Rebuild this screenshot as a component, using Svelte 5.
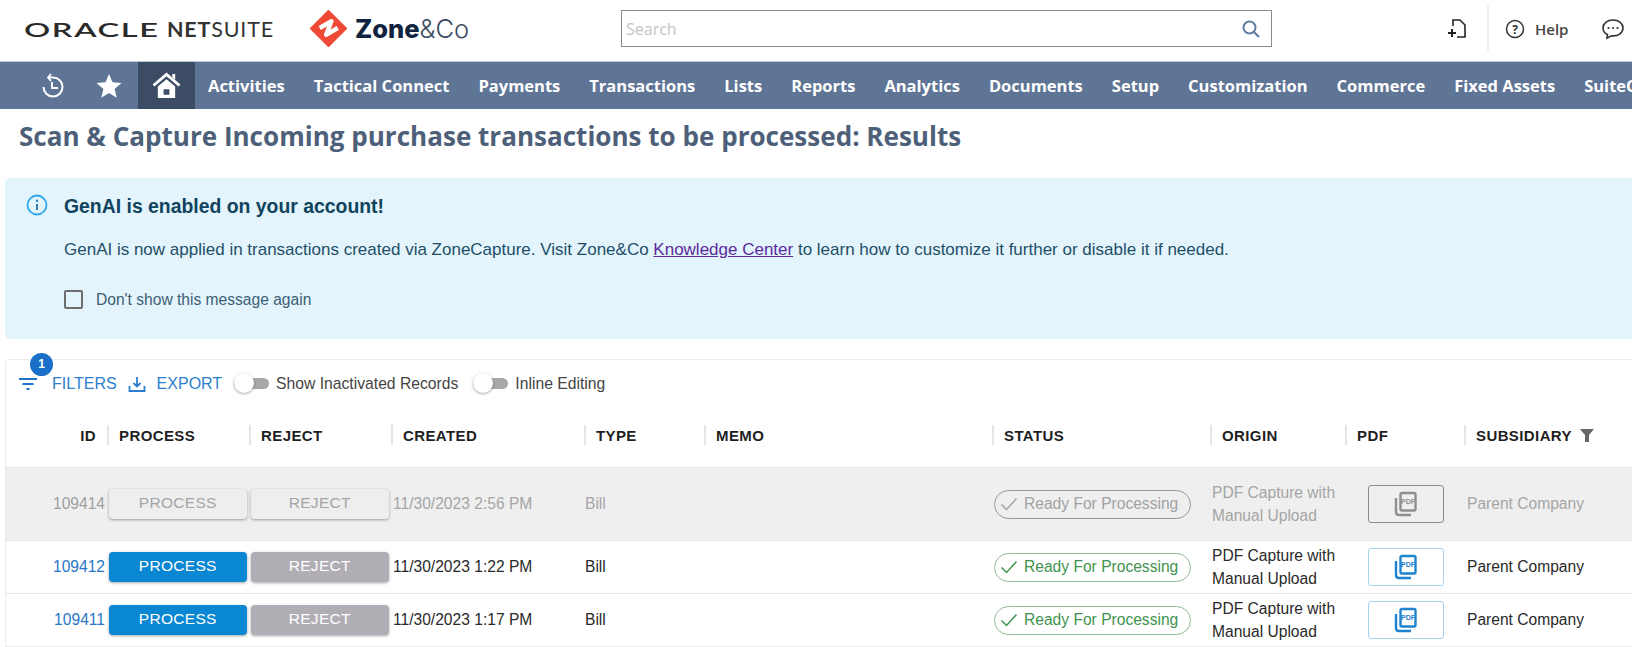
<script>
const navItems = ['Activities', 'Tactical Connect', 'Payments', 'Transactions', 'Lists', 'Reports', 'Analytics', 'Documents', 'Setup', 'Customization', 'Commerce', 'Fixed Assets', 'SuiteCloud'];

const columns = ['ID', 'PROCESS', 'REJECT', 'CREATED', 'TYPE', 'MEMO', 'STATUS', 'ORIGIN', 'PDF', 'SUBSIDIARY'];

const rows = [
    { id: 109414, created: '11/30/2023 2:56 PM', inactive: true },
    { id: 109412, created: '11/30/2023 1:22 PM', inactive: false },
    { id: 109411, created: '11/30/2023 1:17 PM', inactive: false }
];
</script>

<div class="page">
    <header class="topbar">
        <div class="oracle"><span>ORACLE</span></div>
        <div class="netsuite"><b>NET</b>SUITE</div>
        <svg class="zone-mark" viewBox="0 0 38 38" width="37" height="37">
            <path d="M19 1 L37 19 L19 37 L1 19 Z" fill="#ee4a36" stroke="#ee4a36" stroke-width="2" stroke-linejoin="round" />
            <path d="M10 18.500 L22 11.500 L16.500 25.500 L28.500 18.500" fill="none" stroke="#fff" stroke-width="4.500" stroke-linejoin="round" />
        </svg>
        <div class="zone-text"><b>Zone</b>&amp;Co</div>
        <div class="search">
            <span>Search</span>
            <svg viewBox="0 0 20 20" width="20" height="20">
                <circle cx="8.5" cy="8.5" r="6" fill="none" stroke="#5f7ea3" stroke-width="2" />
                <path d="M13 13 L18 18" stroke="#5f7ea3" stroke-width="2.2" />
            </svg>
        </div>
        <svg class="add-page" viewBox="0 0 20 22" width="20" height="22">
            <path d="M6 8 V2 H13 L18 7 V19 H10" fill="none" stroke="#222" stroke-width="1.6" />
            <path d="M5 11 V19 M1 15 H9" stroke="#222" stroke-width="2" />
        </svg>
        <div class="divider"></div>
        <svg class="help-icon" viewBox="0 0 20 20" width="20" height="20">
            <circle cx="10" cy="10" r="8.5" fill="none" stroke="#333" stroke-width="1.5" />
            <text x="10" y="14.5" text-anchor="middle" class="help-q">?</text>
        </svg>
        <span class="help">Help</span>
        <svg class="chat" viewBox="0 0 24 22" width="24" height="22">
            <path d="M12 2 C6 2 2 5.5 2 10 C2 13 4 15.5 6.5 16.5 L6 20 L10.5 17.8 C17 18.500 22 15 22 10 C22 5.500 18 2 12 2 Z" fill="none" stroke="#333" stroke-width="1.6" />
            <circle cx="7.500" cy="10" r="1.100" fill="#333" /><circle cx="12" cy="10" r="1.100" fill="#333" /><circle cx="16.500" cy="10" r="1.100" fill="#333" />
        </svg>
    </header>

    <nav class="nav">
        <div class="nav-icon history">
            <svg viewBox="0 0 26 26" width="26" height="26">
                <path d="M3.500 14 A9.500 9.500 0 1 0 13 4.500 H9" fill="none" stroke="#fff" stroke-width="2" />
                <path d="M11 1 L8 4.500 L11 8" fill="none" stroke="#fff" stroke-width="1.800" />
                <path d="M12 9 V15 H18" fill="none" stroke="#fff" stroke-width="2" />
            </svg>
        </div>
        <div class="nav-icon star">
            <svg viewBox="0 0 26 26" width="26" height="26">
                <path d="M13 1 L16.500 9.300 L25.500 10 L18.600 15.900 L20.800 24.800 L13 20 L5.200 24.800 L7.400 15.900 L0.500 10 L9.500 9.300 Z" fill="#fff" />
            </svg>
        </div>
        <div class="nav-home">
            <svg viewBox="0 0 30 28" width="29" height="27">
                <path d="M1.500 14 L15 2.500 L28.500 14" fill="none" stroke="#fff" stroke-width="3" />
                <path d="M21 2 H24 V8 L21 5.500 Z" fill="#fff" />
                <path d="M6 15 L15 7.500 L24 15 V27 H6 Z M12 18 V23.500 H18 V18 Z" fill="#fff" fill-rule="evenodd" />
            </svg>
        </div>
        <div class="nav-links">
            {#each navItems as item}
                <span>{item}</span>
            {/each}
        </div>
    </nav>

    <h1>Scan &amp; Capture Incoming purchase transactions to be processed: Results</h1>

    <section class="banner">
        <svg class="info" viewBox="0 0 22 22" width="22" height="22">
            <circle cx="11" cy="11" r="9.500" fill="none" stroke="#2fa8ee" stroke-width="1.800" />
            <circle cx="11" cy="6.800" r="1.200" fill="#2f7fae" />
            <path d="M11 10 V16" stroke="#2f7fae" stroke-width="2" />
        </svg>
        <div class="banner-body">
            <div class="banner-title">GenAI is enabled on your account!</div>
            <p>GenAI is now applied in transactions created via ZoneCapture. Visit Zone&amp;Co <span class="kc">Knowledge Center</span> to learn how to customize it further or disable it if needed.</p>
            <label><i class="check"></i>Don't show this message again</label>
        </div>
    </section>

    <section class="card">
        <div class="toolbar">
            <div class="filter-btn">
                <svg viewBox="0 0 20 14" width="20" height="14">
                    <path d="M1 2 H19 M4.500 7 H15.500 M8.500 12 H11.500" stroke="#1f73c9" stroke-width="2" />
                </svg>
                <span class="badge">1</span>
                <span class="tool-link">FILTERS</span>
            </div>
            <div class="export-btn">
                <svg viewBox="0 0 18 18" width="18" height="18">
                    <path d="M9 2 V11 M5.500 8 L9 11.500 L12.500 8" fill="none" stroke="#2c7fd0" stroke-width="1.800" />
                    <path d="M1.500 11 V16 H16.500 V11" fill="none" stroke="#2c7fd0" stroke-width="1.800" />
                </svg>
                <span class="tool-link">EXPORT</span>
            </div>
            <div class="toggle first"><i></i></div>
            <span class="toggle-label">Show Inactivated Records</span>
            <div class="toggle second"><i></i></div>
            <span class="toggle-label">Inline Editing</span>
        </div>

        <div class="row head">
            {#each columns as col, i}
                <div class="th" class:id-col={i === 0}>
                    {col}
                    {#if col === 'SUBSIDIARY'}
                        <svg viewBox="0 0 14 14" width="14" height="14"><path d="M0 1 H14 L9 7 V14 H5 V7 Z" fill="#666" /></svg>
                    {/if}
                </div>
            {/each}
        </div>

        {#each rows as row}
            <div class="row item" class:inactive={row.inactive}>
                <div class="cell id">{row.id}</div>
                <div class="cell btn-cell"><span class="btn process">PROCESS</span></div>
                <div class="cell btn-cell"><span class="btn reject">REJECT</span></div>
                <div class="cell date">{row.created}</div>
                <div class="cell type">Bill</div>
                <div class="cell"></div>
                <div class="cell status-cell">
                    <span class="pill">
                        <svg viewBox="0 0 18 14" width="18" height="14"><path d="M1.500 7.500 L6.500 12.500 L16.500 1.500" fill="none" stroke="currentColor" stroke-width="1.500" /></svg>
                        Ready For Processing
                    </span>
                </div>
                <div class="cell origin">PDF Capture with<br />Manual Upload</div>
                <div class="cell pdf-cell">
                    <span class="pdf-btn">
                        <svg viewBox="0 0 24 26" width="24" height="26">
                            <path d="M2 7 V21 Q2 24 5 24 H17" fill="none" stroke="currentColor" stroke-width="2.400" />
                            <rect x="6.500" y="2" width="15" height="17.500" rx="1.500" fill="none" stroke="currentColor" stroke-width="2.400" />
                            <text x="14" y="13" text-anchor="middle" class="pdf-label" fill="currentColor">PDF</text>
                        </svg>
                    </span>
                </div>
                <div class="cell subsidiary">Parent Company</div>
            </div>
        {/each}
    </section>
</div>

<style>
    :global(body) {
        margin: 0;
        background: #fff;
    }

    .page {
        width: 1632px;
        height: 647px;
        overflow: hidden;
        font-family: "Liberation Sans", Arial, sans-serif;
    }

    .topbar {
        display: flex;
        align-items: center;
        height: 61px;
        box-sizing: border-box;
        padding: 0 0 4px 24px;
    }

    .oracle {
        font-family: Lato, sans-serif;
        font-size: 20px;
        font-weight: 600;
        letter-spacing: 1px;
        color: #2a2a2a;
        width: 143px;
    }

    .oracle span {
        display: inline-block;
        transform: scaleX(1.63);
        transform-origin: left center;
    }

    .netsuite {
        font-family: Lato, sans-serif;
        font-size: 21.500px;
        letter-spacing: 0.8px;
        color: #333;
        width: 143px;
    }

    .netsuite b {
        font-weight: 700;
    }

    .zone-text {
        font-family: Inter, sans-serif;
        font-size: 25.500px;
        font-weight: 300;
        color: #3a4a5e;
        margin-left: 8px;
        width: 266px;
    }

    .zone-text b {
        font-weight: 800;
        color: #0f2340;
    }

    .search {
        display: flex;
        align-items: center;
        justify-content: space-between;
        width: 651px;
        height: 37px;
        box-sizing: border-box;
        border: 1px solid #8a8a8a;
        padding: 0 10px 0 4px;
        font-family: "Open Sans", sans-serif;
        font-size: 16px;
        color: #c4c4c4;
    }

    .add-page {
        margin-left: 175px;
    }

    .divider {
        width: 2px;
        height: 47px;
        background: #f1f1f1;
        margin-left: 20px;
    }

    .help-icon {
        margin-left: 16px;
    }

    .help-q {
        font-family: "Open Sans", sans-serif;
        font-weight: 700;
        font-size: 12px;
        fill: #333;
    }

    .help {
        font-family: "Open Sans", sans-serif;
        font-size: 15px;
        font-weight: 600;
        color: #444;
        margin-left: 10px;
    }

    .chat {
        margin-left: 33px;
        flex: none;
    }

    .nav {
        display: flex;
        align-items: stretch;
        height: 48px;
        background: #5f7596;
        border-top: 1px solid #b9c5d6;
        box-sizing: border-box;
        overflow: hidden;
    }

    .nav-icon {
        display: flex;
        align-items: center;
        justify-content: center;
        flex: none;
    }

    .history {
        margin-left: 26px;
        width: 54px;
    }

    .star {
        width: 58px;
    }

    .nav-home {
        display: flex;
        align-items: center;
        justify-content: center;
        width: 57px;
        background: #3c4c64;
        flex: none;
    }

    .nav-links {
        display: flex;
        align-items: center;
        gap: 29px;
        padding-left: 13px;
        font-family: "Open Sans", sans-serif;
        font-weight: 700;
        font-size: 16.500px;
        color: #fff;
        white-space: nowrap;
    }

    h1 {
        margin: 10px 0 0 19px;
        font-family: "Open Sans", sans-serif;
        font-size: 26.050px;
        line-height: 35px;
        font-weight: 700;
        color: #4d5f79;
        white-space: nowrap;
    }

    .banner {
        display: flex;
        height: 161px;
        margin: 24px 0 0 5px;
        box-sizing: border-box;
        padding: 17px 0 0 21px;
        background: #e3f4fc;
        border-radius: 5px 0 0 5px;
        color: #17465f;
    }

    .info {
        flex: none;
        margin-top: -1px;
    }

    .banner-body {
        margin-left: 16px;
    }

    .banner-title {
        font-size: 19.400px;
        line-height: 22px;
        font-weight: 700;
        color: #0f435e;
    }

    .banner p {
        margin: 23px 0 0;
        font-size: 17px;
        line-height: 20px;
        color: #1f4f68;
        white-space: nowrap;
    }

    .kc {
        color: #5b2a9e;
        text-decoration: underline;
    }

    .banner label {
        display: flex;
        align-items: center;
        margin-top: 30px;
        font-size: 15.600px;
        color: #3c6075;
    }

    .check {
        width: 15px;
        height: 15px;
        border: 2px solid #6e6e6e;
        border-radius: 2px;
        margin: 0 13px 0 0;
    }

    .card {
        margin: 20px 0 0 5px;
        border: 1px solid #ececec;
        border-right: none;
        border-radius: 4px 0 0 0;
    }

    .toolbar {
        display: flex;
        align-items: center;
        height: 47px;
        padding-left: 12px;
        font-size: 16px;
    }

    .filter-btn {
        position: relative;
        display: flex;
        align-items: center;
        gap: 14px;
    }

    .badge {
        position: absolute;
        left: 12px;
        top: -22px;
        width: 23px;
        height: 23px;
        border-radius: 50%;
        background: #1a6fc9;
        color: #fff;
        font-size: 12px;
        font-weight: 700;
        text-align: center;
        line-height: 23px;
    }

    .tool-link {
        color: #2c7fd0;
    }

    .export-btn {
        display: flex;
        align-items: center;
        gap: 11px;
        margin-left: 11px;
    }

    .toggle {
        position: relative;
        width: 35px;
        height: 11px;
        background: #a8a8a8;
        border-radius: 6px;
        flex: none;
    }

    .toggle i {
        position: absolute;
        left: 0;
        top: -5px;
        width: 20px;
        height: 20px;
        border-radius: 50%;
        background: #fff;
        box-shadow: 0 1px 3px rgba(0, 0, 0, 0.35);
    }

    .first {
        margin-left: 12px;
    }

    .second {
        margin-left: 15px;
    }

    .toggle-label {
        margin-left: 7px;
        font-size: 15.700px;
        color: #444;
    }

    .row {
        display: grid;
        grid-template-columns: 101px 142px 142px 193px 120px 288px 218px 135px 119px 1fr;
        align-items: center;
    }

    .head {
        height: 60px;
        padding-bottom: 4px;
        box-sizing: border-box;
    }

    .th {
        display: flex;
        align-items: center;
        gap: 8px;
        height: 20px;
        border-left: 2px solid #e6e6e6;
        padding-left: 10px;
        font-size: 15px;
        font-weight: 700;
        letter-spacing: 0.4px;
        color: #1f1f1f;
    }

    .id-col {
        border-left: none;
        justify-content: flex-end;
        padding: 0 11px 0 0;
    }

    .item {
        height: 53px;
        border-top: 1px solid #e6e6e6;
        box-sizing: border-box;
        font-size: 15.600px;
        color: #2a2a2a;
    }

    .item.inactive {
        height: 73px;
        background: #efefef;
        color: #a5a5a5;
    }

    .id {
        text-align: right;
        padding-right: 2px;
        color: #2a76c8;
    }

    .inactive .id {
        color: #a0a0a0;
    }

    .btn-cell {
        padding-left: 2px;
    }

    .btn {
        display: block;
        height: 30px;
        width: 137.500px;
        border-radius: 4px;
        text-align: center;
        line-height: 27px;
        font-size: 15.500px;
        letter-spacing: 0.3px;
        color: #fff;
        box-shadow: 0 1px 3px rgba(0, 0, 0, 0.35);
    }

    .process {
        background: #0a87d2;
    }

    .reject {
        background: #b1adb5;
    }

    .inactive .process,
    .inactive .reject {
        background: #eeeeee;
        color: #a5a5a5;
    }

    .date {
        padding-left: 2px;
        white-space: nowrap;
    }

    .type {
        padding-left: 1px;
    }

    .status-cell {
        padding-left: 2px;
    }

    .pill {
        display: inline-flex;
        align-items: center;
        gap: 6px;
        height: 29px;
        width: 197px;
        box-sizing: border-box;
        padding-left: 5px;
        border: 1.500px solid #8fbb96;
        border-radius: 15px;
        color: #3f9350;
        white-space: nowrap;
    }

    .inactive .pill {
        border-color: #999;
        color: #a2a2a2;
    }

    .origin {
        padding-left: 2px;
        line-height: 23px;
        white-space: nowrap;
    }

    .pdf-cell {
        padding-left: 23px;
    }

    .pdf-btn {
        display: flex;
        align-items: center;
        justify-content: center;
        width: 76px;
        height: 38px;
        box-sizing: border-box;
        border: 1px solid #a5d3ee;
        border-radius: 3px;
        color: #1f84cf;
        background: #fff;
    }

    .inactive .pdf-btn {
        border-color: #8c8c8c;
        color: #8f8f8f;
        background: transparent;
    }

    .pdf-label {
        font-size: 7px;
        font-weight: 700;
    }

    .subsidiary {
        padding-left: 3px;
        white-space: nowrap;
    }
</style>
